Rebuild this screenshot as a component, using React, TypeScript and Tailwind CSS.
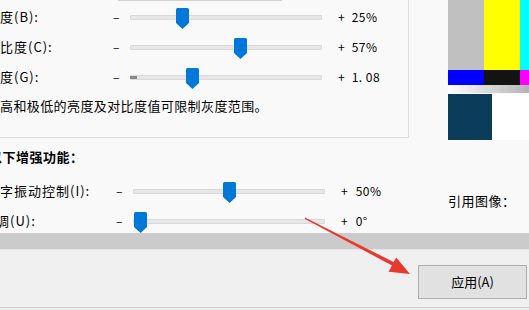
import React from "react";

const font = { fontFamily: '"Noto Sans CJK SC", "Noto Sans", sans-serif' };

function Thumb() {
  return (
    <svg width="13" height="21" viewBox="0 0 13 21" className="block">
      <path d="M1.5 0 H11.5 Q13 0 13 1.5 V15 L6.5 21 L0 15 V1.5 Q0 0 1.5 0 Z" fill="#0078d7" />
    </svg>
  );
}

function Slider({
  label,
  labelOffset = 0,
  labelWidth,
  thumb,
  value,
  fill = false,
  plusGap,
  valueGap,
}: {
  label: string;
  labelOffset?: number;
  labelWidth: number;
  thumb: number;
  value: string;
  fill?: boolean;
  plusGap: number;
  valueGap: number;
}) {
  return (
    <div className="flex h-[30px] items-center text-[13px] text-black">
      <div className="overflow-hidden shrink-0" style={{ width: labelWidth }}>
        <div className="whitespace-nowrap tracking-[1px]" style={{ marginLeft: labelOffset }}>
          {label}
        </div>
      </div>
      <div className="w-[17px] shrink-0 text-[12px]">–</div>
      <div className="relative h-[30px] w-[192px] shrink-0">
        <div className="absolute left-0 right-0 top-[13px] h-[5px] rounded-[1px] border border-[#d9d9d9] bg-[#e7e7e7]" />
        {fill && <div className="absolute left-0 top-[14px] h-[3px] w-[7px] bg-[#8a8a8a]" />}
        <div className="absolute top-[6px]" style={{ left: thumb }}>
          <Thumb />
        </div>
      </div>
      <div className="shrink-0 text-[12px]" style={{ marginLeft: plusGap }}>+</div>
      <div className="shrink-0 text-[12px] tracking-[0.5px]" style={{ marginLeft: valueGap }}>
        {value}
      </div>
    </div>
  );
}

export default function App() {
  return (
    <div className="relative h-[310px] w-[529px] overflow-hidden bg-[#f0f0f0]" style={font}>
      {/* upper content */}
      <div className="flex h-[233px] overflow-hidden bg-[#f9f9f9]">
        <div className="w-[448px] shrink-0">
          <div className="h-[138px] w-[409px] border-b border-r border-[#dedede]">
            <div className="ml-[118px] h-px w-[164px] bg-[#d2d2d2]" />
            <div className="mt-px">
              <Slider label="亮度(B):" labelOffset={-14} labelWidth={113} thumb={46} value="25%" plusGap={16} valueGap={7} />
              <Slider label="对比度(C):" labelOffset={-14} labelWidth={113} thumb={104} value="57%" plusGap={16} valueGap={7} />
              <Slider label="灰度(G):" labelOffset={-14} labelWidth={113} thumb={56} value="1. 08" fill plusGap={16} valueGap={7} />
            </div>
            <div className="mt-[4px] h-[20px] whitespace-nowrap text-[13px] leading-[20px] tracking-[0.4px] text-black">
              高和极低的亮度及对比度值可限制灰度范围。
            </div>
          </div>
          <div className="mt-[9px] h-[20px] overflow-hidden">
            <div className="ml-[-11px] whitespace-nowrap text-[13px] font-bold leading-[20px] tracking-[0.5px] text-black">
              以下增强功能：
            </div>
          </div>
          <div className="mt-[9px]">
            <Slider label="数字振动控制(I):" labelOffset={-14} labelWidth={116} thumb={90} value="50%" plusGap={16} valueGap={8} />
            <Slider label="色调(U):" labelOffset={-18} labelWidth={116} thumb={1} value="0°" plusGap={16} valueGap={8} />
          </div>
        </div>
        <div className="flex-1">
          <div className="flex h-[70px]">
            <div className="w-[36px] bg-[#c0c0c0]" />
            <div className="w-[36px] bg-[#ffff00]" />
            <div className="flex-1 bg-[#00ffff]" />
          </div>
          <div className="flex h-[15px]">
            <div className="w-[36px] bg-[#0000ff]" />
            <div className="w-[36px] bg-[#131313]" />
            <div className="flex-1 bg-[#ff00ff]" />
          </div>
          <div className="h-[8px] bg-gradient-to-r from-[#ffffff] to-[#b4b4b4]" />
          <div className="mt-px flex h-[46px]">
            <div className="w-[44px] bg-[#0b3c5a]" />
            <div className="flex-1 bg-white" />
          </div>
          <div className="mt-[51px] whitespace-nowrap text-[13px] leading-[20px] tracking-[0.5px] text-black">引用图像：</div>
        </div>
      </div>
      {/* band */}
      <div className="h-[16px] bg-[#cbcbcb]" />
      <div className="h-px bg-[#e4e4e4]" />
      {/* footer */}
      <div className="flex h-[57px] justify-end pr-[2px] pt-[15px]">
        <button className="h-[34px] w-[109px] border border-[#adadad] bg-[#e1e1e1] text-[13px] text-black" style={font}>
          应用(A)
        </button>
      </div>
      <div className="h-px bg-[#cfcfcf]" />
      {/* red arrow annotation */}
      <svg className="pointer-events-none absolute left-0 top-0" width="529" height="310">
        <polygon points="305,217.5 305,219 394,266.5 395.5,263" fill="#e8392f" />
        <polygon points="410,274 388.6,271.7 396.2,257.5" fill="#e8392f" />
      </svg>
    </div>
  );
}
